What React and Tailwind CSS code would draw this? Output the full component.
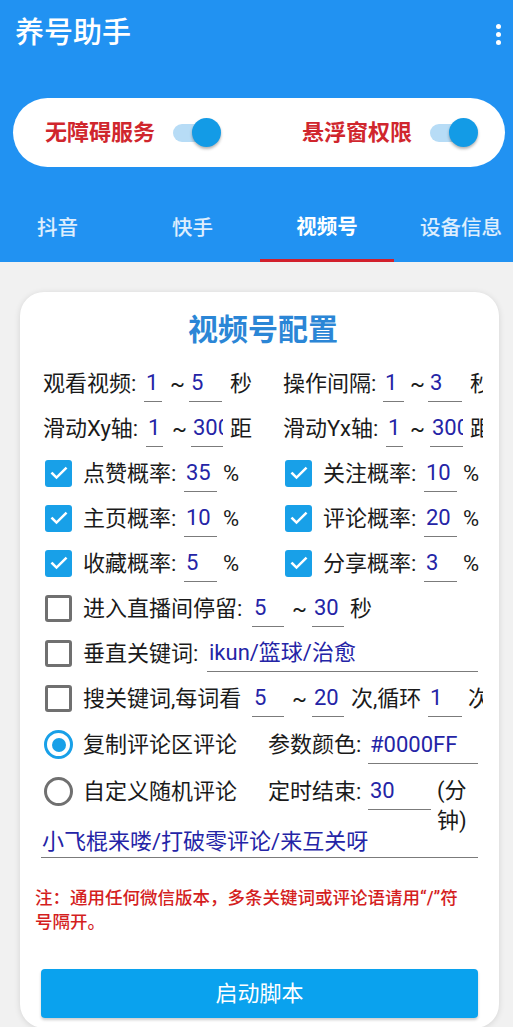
import React from "react";

const FONT = { fontFamily: 'Roboto, "Noto Sans CJK SC", sans-serif' };

function Switch() {
  return (
    <div className="relative h-[29px] w-[48px] shrink-0">
      <div className="absolute left-0 top-[5.5px] h-[18px] w-[40px] rounded-full bg-[#b7dcf6]" />
      <div className="absolute right-0 top-0 h-[29px] w-[29px] rounded-full bg-[#139be6] shadow-[0_2px_3px_rgba(0,0,0,0.3)]" />
    </div>
  );
}

function Field({ className, children }) {
  return (
    <div
      className={`flex h-[38px] shrink-0 items-center overflow-hidden whitespace-nowrap border-b-[1.5px] border-[#7b7b7b] pl-[2px] text-[#2424a6] ${className}`}
    >
      {children}
    </div>
  );
}

function Row({ className = "", children }) {
  return (
    <div className={`flex h-[45px] items-center overflow-hidden whitespace-nowrap ${className}`}>
      {children}
    </div>
  );
}

function CheckBox({ checked }) {
  if (checked) {
    return (
      <div className="ml-[2px] flex h-[27px] w-[27px] shrink-0 items-center justify-center rounded-[3px] bg-[#18a0e8]">
        <svg width="20" height="20" viewBox="0 0 24 24" fill="none">
          <path d="M4 12.5l5 5L20 6.5" stroke="white" strokeWidth="3" strokeLinecap="square" />
        </svg>
      </div>
    );
  }
  return <div className="ml-[2px] h-[27px] w-[27px] shrink-0 rounded-[3px] border-[3px] border-[#707070]" />;
}

function Radio({ checked }) {
  if (checked) {
    return (
      <div className="ml-[1px] flex h-[29px] w-[29px] shrink-0 items-center justify-center rounded-full border-[3.5px] border-[#18a0e8]">
        <div className="h-[14px] w-[14px] rounded-full bg-[#18a0e8]" />
      </div>
    );
  }
  return <div className="ml-[1px] h-[29px] w-[29px] shrink-0 rounded-full border-[3px] border-[#707070]" />;
}

function ProbItem({ label, value }) {
  return (
    <>
      <CheckBox checked />
      <span className="ml-[11px] w-[101px] shrink-0">{label}</span>
      <Field className="w-[33px]">{value}</Field>
      <span className="ml-[6px]">%</span>
    </>
  );
}

export default function App() {
  const tabs = ["抖音", "快手", "视频号", "设备信息"];
  return (
    <div className="min-h-screen w-full overflow-hidden bg-[#f1f1f1] text-[22px] text-[#1a1a1a]" style={FONT}>
      {/* header */}
      <div className="h-[262px] bg-[#2192f2]">
        <div className="flex h-[68px] items-center justify-between pl-[15px] pr-[12px]">
          <span className="text-[29px] font-medium text-white">养号助手</span>
          <div className="flex flex-col gap-[3px]">
            <span className="h-[5px] w-[5px] rounded-full bg-white" />
            <span className="h-[5px] w-[5px] rounded-full bg-white" />
            <span className="h-[5px] w-[5px] rounded-full bg-white" />
          </div>
        </div>
        <div className="ml-[13px] mt-[30px] flex h-[69px] w-[492px] items-center rounded-full bg-white pl-[32px]">
          <span className="w-[110px] shrink-0 font-bold text-[#d0262d]">无障碍服务</span>
          <div className="ml-[18px]">
            <Switch />
          </div>
          <span className="ml-[81px] w-[110px] shrink-0 font-bold text-[#d0262d]">悬浮窗权限</span>
          <div className="ml-[18px]">
            <Switch />
          </div>
        </div>
        <div className="mt-[28px] flex h-[67px] items-stretch text-[20.5px]">
          <div className="flex w-[260px] items-center">
            <span className="ml-[37px] font-medium text-white/85">{tabs[0]}</span>
            <span className="ml-[94px] font-medium text-white/85">{tabs[1]}</span>
          </div>
          <div className="flex w-[134px] flex-col">
            <div className="flex flex-1 items-center justify-center font-bold text-white">{tabs[2]}</div>
            <div className="h-[3px] bg-[#d2202c]" />
          </div>
          <div className="flex items-center">
            <span className="ml-[26px] whitespace-nowrap font-medium text-white/85">{tabs[3]}</span>
          </div>
        </div>
      </div>

      {/* card */}
      <div className="ml-[20px] mt-[30px] w-[479px] rounded-[24px] bg-white pb-[10px] pl-[23px] pr-[16px] pt-[16px] shadow-[0_1px_6px_rgba(0,0,0,0.12)]">
        <div className="h-[44px] text-center text-[30px] font-bold leading-[44px] text-[#2b86d6]">视频号配置</div>

        <Row className="mt-[8.5px]">
          <div className="flex w-[240px] shrink-0 items-center">
            <span className="w-[101px] shrink-0">观看视频:</span>
            <Field className="w-[18px]">1</Field>
            <span className="ml-[8px] w-[12px] shrink-0">~</span>
            <Field className="ml-[7px] w-[33px]">5</Field>
            <span className="ml-[8px]">秒</span>
          </div>
          <div className="flex min-w-0 flex-1 items-center overflow-hidden">
            <span className="w-[100px] shrink-0">操作间隔:</span>
            <Field className="w-[21px]">1</Field>
            <span className="ml-[6px] w-[12px] shrink-0">~</span>
            <Field className="ml-[6px] w-[34px]">3</Field>
            <span className="ml-[8px]">秒</span>
          </div>
        </Row>

        <Row>
          <div className="flex w-[240px] shrink-0 items-center">
            <span className="w-[103px] shrink-0">滑动Xy轴:</span>
            <Field className="w-[17px]">1</Field>
            <span className="ml-[9px] w-[11px] shrink-0">~</span>
            <Field className="ml-[8px] w-[32px]">300</Field>
            <span className="ml-[7px]">距</span>
          </div>
          <div className="flex min-w-0 flex-1 items-center overflow-hidden">
            <span className="w-[103px] shrink-0">滑动Yx轴:</span>
            <Field className="w-[17px]">1</Field>
            <span className="ml-[7px] w-[12px] shrink-0">~</span>
            <Field className="ml-[8px] w-[33px]">300</Field>
            <span className="ml-[7px]">距</span>
          </div>
        </Row>

        <Row>
          <div className="flex w-[240px] shrink-0 items-center">
            <ProbItem label="点赞概率:" value="35" />
          </div>
          <div className="flex min-w-0 flex-1 items-center overflow-hidden">
            <ProbItem label="关注概率:" value="10" />
          </div>
        </Row>
        <Row>
          <div className="flex w-[240px] shrink-0 items-center">
            <ProbItem label="主页概率:" value="10" />
          </div>
          <div className="flex min-w-0 flex-1 items-center overflow-hidden">
            <ProbItem label="评论概率:" value="20" />
          </div>
        </Row>
        <Row>
          <div className="flex w-[240px] shrink-0 items-center">
            <ProbItem label="收藏概率:" value="5" />
          </div>
          <div className="flex min-w-0 flex-1 items-center overflow-hidden">
            <ProbItem label="分享概率:" value="3" />
          </div>
        </Row>

        <Row>
          <CheckBox />
          <span className="ml-[11px] w-[169px] shrink-0">进入直播间停留:</span>
          <Field className="w-[32px]">5</Field>
          <span className="ml-[8px] w-[12px] shrink-0">~</span>
          <Field className="ml-[8px] w-[32px]">30</Field>
          <span className="ml-[6px]">秒</span>
        </Row>
        <Row>
          <CheckBox />
          <span className="ml-[11px] w-[124px] shrink-0">垂直关键词:</span>
          <Field className="w-[271px]">ikun/篮球/治愈</Field>
        </Row>
        <Row>
          <CheckBox />
          <span className="ml-[11px] w-[169px] shrink-0">搜关键词,每词看</span>
          <Field className="w-[32px]">5</Field>
          <span className="ml-[8px] w-[12px] shrink-0">~</span>
          <Field className="ml-[8px] w-[32px]">20</Field>
          <span className="ml-[7px] w-[77px] shrink-0">次,循环</span>
          <Field className="w-[34px]">1</Field>
          <span className="ml-[6px]">次</span>
        </Row>

        <Row className="h-[48px]">
          <Radio checked />
          <span className="ml-[10px] w-[185px] shrink-0">复制评论区评论</span>
          <span className="w-[100px] shrink-0">参数颜色:</span>
          <Field className="w-[110px]">#0000FF</Field>
        </Row>
        <div className="flex h-[51px] items-start">
          <div className="flex h-[45px] items-center whitespace-nowrap">
            <Radio />
            <span className="ml-[10px] w-[185px] shrink-0">自定义随机评论</span>
            <span className="w-[100px] shrink-0">定时结束:</span>
            <Field className="w-[63px]">30</Field>
          </div>
          <div className="ml-[6px] mt-[7.5px] w-[46px] leading-[30px]">(分钟)</div>
        </div>
        <div className="-ml-[2px] flex h-[38.5px] w-[437px] items-end border-b-[1.5px] border-[#7b7b7b] pb-[1px] pl-[1px] leading-[28px] text-[#2424a6]">
          小飞棍来喽/打破零评论/来互关呀
        </div>

        <div className="-ml-[8px] mt-[28px] whitespace-nowrap text-[17.5px] font-medium leading-[24px] text-[#d41e1e]">
          注：通用任何微信版本，多条关键词或评论语请用“/”符
          <br />
          号隔开。
        </div>

        <button
          type="button"
          className="-ml-[2px] mt-[35px] flex h-[49px] w-[437px] items-center justify-center rounded-[4px] bg-[#0aa2ee] text-[22px] text-white shadow-[0_2px_3px_rgba(0,0,0,0.2)]"
        >
          启动脚本
        </button>
      </div>
    </div>
  );
}
